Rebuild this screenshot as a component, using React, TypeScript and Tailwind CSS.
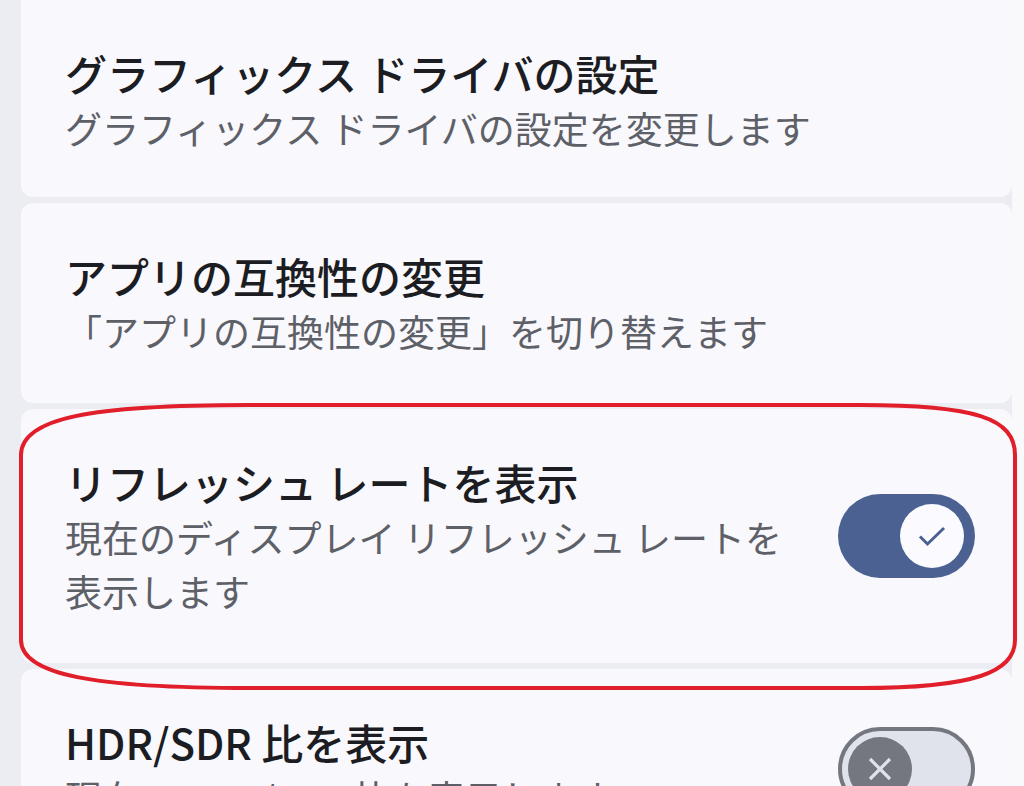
import React from "react";

const FONT = { fontFamily: '"Noto Sans CJK JP", "Noto Sans", sans-serif' };

type Row = { title: string; desc: string; toggle?: "on" | "off"; first?: boolean };

const ROWS: Row[] = [
  { title: "グラフィックス ドライバの設定", desc: "グラフィックス ドライバの設定を変更します", first: true },
  { title: "アプリの互換性の変更", desc: "「アプリの互換性の変更」を切り替えます" },
  { title: "リフレッシュ レートを表示", desc: "現在のディスプレイ リフレッシュ レートを表示します", toggle: "on" },
  { title: "HDR/SDR 比を表示", desc: "現在の HDR/SDR 比を表示します", toggle: "off" },
];

function SwitchOn() {
  return (
    <div className="flex h-[84px] w-[137px] shrink-0 items-center justify-end rounded-full bg-[#4a6191] pr-[11px]">
      <div className="flex h-[64px] w-[64px] items-center justify-center rounded-full bg-[#fbfbff]">
        <svg width="30" height="22" viewBox="0 0 30 22" fill="none">
          <path d="M3 11.5 L10.5 19 L27 3" stroke="#4a6191" strokeWidth="3" />
        </svg>
      </div>
    </div>
  );
}

function SwitchOff() {
  return (
    <div className="flex h-[84px] w-[137px] shrink-0 items-center rounded-full border-4 border-[#74777f] bg-[#e0e2ec] pl-[6px]">
      <div className="flex h-[64px] w-[64px] items-center justify-center rounded-full bg-[#74777f]">
        <svg width="26" height="26" viewBox="0 0 26 26" fill="none">
          <path d="M3 3 L23 23 M23 3 L3 23" stroke="#e0e2ec" strokeWidth="3.2" />
        </svg>
      </div>
    </div>
  );
}

function Card({ r }: { r: Row }) {
  return (
    <div
      className={`flex items-center justify-between bg-[#f8f8fd] pl-[44px] pr-[37px] ${
        r.first ? "rounded-b-[12px] pt-[45px] pb-[42px]" : "rounded-[12px] py-[45px]"
      }`}
    >
      <div className={r.toggle ? "max-w-[740px]" : ""}>
        <p className="text-[42px] font-medium leading-[56px] text-[#1c1d22]">{r.title}</p>
        <p className="text-[37px] leading-[54px] text-[#5e6067]">{r.desc}</p>
      </div>
      {r.toggle === "on" && <SwitchOn />}
      {r.toggle === "off" && <SwitchOff />}
    </div>
  );
}

export default function App() {
  return (
    <div className="relative flex h-[786px] w-[1024px] overflow-hidden bg-[#ecedf3]" style={FONT}>
      <div className="w-[21px] shrink-0" />
      <div className="flex w-[991px] shrink-0 flex-col gap-[6px]">
        {ROWS.map((r) => (
          <Card key={r.title} r={r} />
        ))}
      </div>
      <div className="flex-1 bg-[#f9f9fc]" />

      {/* red annotation ring */}
      <svg className="pointer-events-none absolute left-0 top-0" width="1024" height="786" viewBox="0 0 1024 786" fill="none">
        <path
          d="M21 640 L21 455 C21 418 90 405 250 405 L860 405 C975 405 1015 418 1015 455 L1015 640 C1015 672 975 688 860 688 L250 688 C95 688 21 675 21 640 Z"
          stroke="#e01f2a"
          strokeWidth="4"
        />
      </svg>
    </div>
  );
}
